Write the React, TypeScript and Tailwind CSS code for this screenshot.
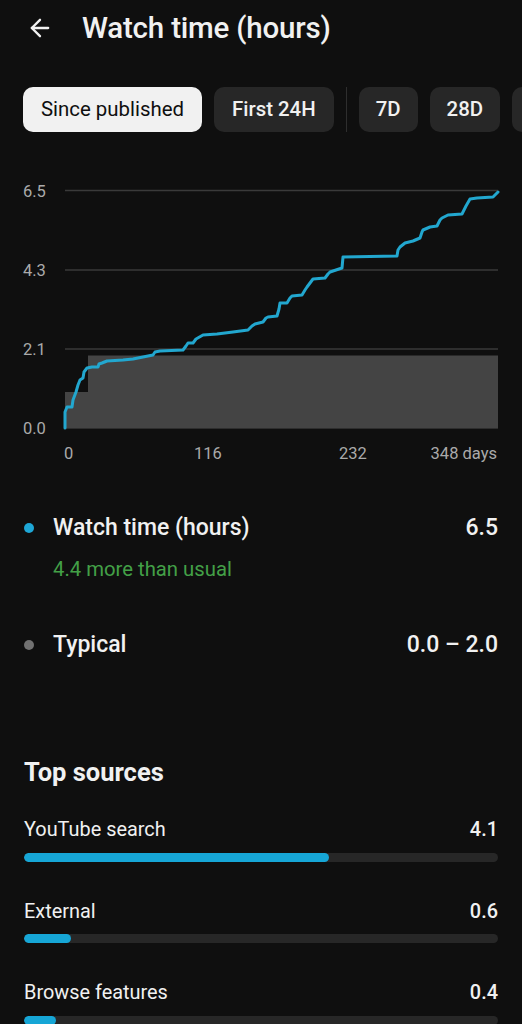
import { ArrowLeft } from "lucide-react"

const LINE =
  "M65,428 L65,412 L67,407 L72,407 L73,400 L76,392 L78,385 L80,380 L83,378 L84,372 L87,368 L92,367 L98,367 L99,364 L102,363 L107,361 L123,360 L133,359 L143,357 L153,355 L155,352 L160,351 L183,350 L186,346 L188,343 L193,343 L196,339 L203,335 L217,334 L233,332 L248,330 L252,326 L255,324 L263,322 L266,318 L268,317 L277,316 L279,309 L280,303 L287,303 L290,298 L292,296 L302,295 L305,290 L307,287 L310,283 L313,279 L325,278 L328,274 L330,272 L336,270 L342,268 L343,257 L397,256 L398,250 L400,247 L405,243 L413,241 L420,238 L422,232 L423,230 L430,227 L437,226 L440,220 L442,218 L448,215 L462,214 L466,206 L470,199 L477,198 L493,197 L498,192"

const chips = ["Since published", "First 24H", "|", "7D", "28D", "90D"]

const sources = [
  { name: "YouTube search", value: "4.1", pct: 64.4 },
  { name: "External", value: "0.6", pct: 10 },
  { name: "Browse features", value: "0.4", pct: 6.8 },
]

// ─── Chart ──────────────────────────────────────────────────────────────────
function Chart() {
  const grid = [
    { y: 190.5, label: "6.5" },
    { y: 270, label: "4.3" },
    { y: 349, label: "2.1" },
    { y: 428, label: "0.0" },
  ]
  return (
    <svg width={522} height={300} viewBox="0 170 522 300" className="block">
      {grid.map(g => (
        <g key={g.label}>
          <line x1={65} x2={498} y1={g.y} y2={g.y} stroke="#3a3a3a" strokeWidth={1.5} />
          <text x={23} y={g.y + 6} fill="#aaaaaa" fontSize={16.5}>{g.label}</text>
        </g>
      ))}
      <path d="M65,428 L65,392 L88,392 L88,355.5 L498,355.5 L498,428 Z" fill="#444444" />
      <path d={LINE} fill="none" stroke="#22a7cf" strokeWidth={3} strokeLinejoin="round" strokeLinecap="round" />
      <text x={64} y={459} fill="#aaaaaa" fontSize={16.5}>0</text>
      <text x={208} y={459} fill="#aaaaaa" fontSize={16.5} textAnchor="middle">116</text>
      <text x={353} y={459} fill="#aaaaaa" fontSize={16.5} textAnchor="middle">232</text>
      <text x={497} y={459} fill="#aaaaaa" fontSize={16.5} textAnchor="end">348 days</text>
    </svg>
  )
}

export default function App() {
  return (
    <div className="w-[522px] h-[1024px] overflow-hidden bg-[#0f0f0f] text-[#f1f1f1]" style={{ fontFamily: "Roboto, 'Liberation Sans', sans-serif" }}>
      {/* header */}
      <div className="h-[56px] flex items-center px-[26px]">
        <ArrowLeft className="w-[28px] h-[28px] text-[#f1f1f1]" strokeWidth={2} />
        <div className="ml-[28px] text-[29.5px] leading-[36px] font-medium tracking-[-0.2px]">Watch time (hours)</div>
      </div>

      {/* chips */}
      <div className="mt-[31px] flex items-center pl-[23px] whitespace-nowrap overflow-hidden">
        {chips.map((c, i) =>
          c === "|" ? (
            <div key={i} className="w-px h-[45px] bg-[#2e2e2e] shrink-0 ml-[12px]" />
          ) : (
            <div
              key={i}
              className={
                "h-[45px] shrink-0 rounded-[10px] flex items-center text-[20.4px] " +
                (i === 0
                  ? "bg-[#f1f1f1] text-[#0f0f0f] px-[18px]"
                  : "bg-[#272727] text-[#f1f1f1] font-medium ml-[12px] " + (i === 1 ? "px-[18px]" : "px-[17px]"))
              }
            >
              {c}
            </div>
          )
        )}
      </div>

      {/* chart */}
      <div className="mt-[38px]">
        <Chart />
      </div>

      {/* legend */}
      <div className="px-[24px]">
        <div className="mt-[43px] flex items-center h-[30px]">
          <div className="w-[10px] h-[10px] rounded-full bg-[#1ea7d6]" />
          <div className="ml-[19px] text-[23px] leading-[30px] font-medium flex-1">Watch time (hours)</div>
          <div className="text-[23px] leading-[30px] font-medium">6.5</div>
        </div>
        <div className="ml-[29px] mt-[14px] text-[20.3px] leading-[24px] text-[#43a047]">4.4 more than usual</div>
        <div className="mt-[49px] flex items-center h-[30px]">
          <div className="w-[10px] h-[10px] rounded-full bg-[#717171]" />
          <div className="ml-[19px] text-[23px] leading-[30px] font-medium flex-1">Typical</div>
          <div className="text-[23px] leading-[30px] font-medium">0.0 – 2.0</div>
        </div>

        {/* top sources */}
        <div className="mt-[97px] text-[25.5px] leading-[30px] font-bold">Top sources</div>
        <div className="mt-[31px] flex flex-col gap-[38px]">
          {sources.map(s => (
            <div key={s.name}>
              <div className="flex items-center justify-between text-[19.9px] leading-[24px]">
                <span>{s.name}</span>
                <span className="font-medium">{s.value}</span>
              </div>
              <div className="mt-[10.5px] h-[9px] rounded-full bg-[#272727] overflow-hidden">
                <div className="h-full rounded-full bg-[#16a6d6]" style={{ width: `${s.pct}%` }} />
              </div>
            </div>
          ))}
        </div>
      </div>
    </div>
  )
}
